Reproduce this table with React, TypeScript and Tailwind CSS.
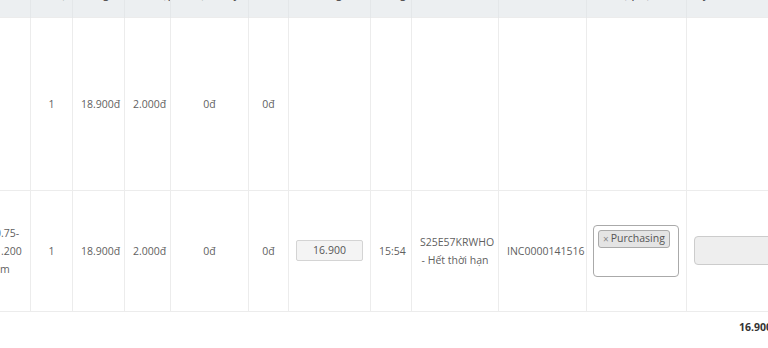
import React from 'react';

type Col = {width: string};

const cols: Col[] = [
	{width: 'w-[100px]'},
	{width: 'w-[42px]'},
	{width: 'w-[52px]'},
	{width: 'w-[46px]'},
	{width: 'w-[78px]'},
	{width: 'w-[40px]'},
	{width: 'w-[82px]'},
	{width: 'w-[41px]'},
	{width: 'w-[87px]'},
	{width: 'w-[88px]'},
	{width: 'w-[100px]'},
	{width: 'w-[138px]'},
];

const headers = [
	'Sản phẩm',
	'Số lượng',
	'Đơn giá',
	'Giá nhập',
	'Phí vận chuyển',
	'VAT',
	'Tổng',
	'Thời gian',
	'Voucher',
	'Mã hóa đơn',
	'Bộ phận',
	'Lý do',
];

const td = 'border border-[#ececec] px-2 text-center align-middle';

const OrderRow: React.FC<{first?: React.ReactNode; last?: boolean; height: string}> = ({first, last, height}) => {
	return (
		<tr className={height}>
			<td className={`${td} text-left`}>{first}</td>
			<td className={td}>1</td>
			<td className={`${td} px-1`}>18.900đ</td>
			<td className={`${td} px-1`}>2.000đ</td>
			<td className={td}>0đ</td>
			<td className={td}>0đ</td>
			<td className={`${td} pl-[7px]`}>
				{last && (
					<div className="h-[21px] w-[67px] rounded-[2px] border border-[#d4d4d4] bg-[#f4f4f4] text-center leading-[19px] text-[#555]">
						16.900
					</div>
				)}
			</td>
			<td className={`${td} px-1`}>{last && '15:54'}</td>
			<td className={`${td} px-1`}>
				{last && (
					<>
						S25E57KRWHO
						<br />- Hết thời hạn
					</>
				)}
			</td>
			<td className={`${td} px-1`}>{last && 'INC0000141516'}</td>
			<td className={`${td} px-[6px]`}>
				{last && (
					<div className="h-[52px] w-[86px] rounded-[4px] border border-[#aaaaaa] bg-white p-[4px] text-left">
						<span className="inline-flex h-[18px] items-center rounded-[3px] border border-[#aaaaaa] bg-[#e4e4e4] px-[4px] leading-none text-[#555]">
							<span className="mr-[2px] text-[10px] text-[#888]">×</span>Purchasing
						</span>
					</div>
				)}
			</td>
			<td className={`${td} pl-[7px] text-left`}>
				{last && <div className="h-[29px] w-[122px] rounded-[4px] border border-[#cccccc] bg-[#eeeeee]" />}
			</td>
		</tr>
	);
};

export default function App() {
	return (
		<div
			className="h-[348px] w-[768px] overflow-hidden bg-white text-[10.5px] leading-[18px] text-[#5f5f5f]"
			style={{fontFamily: '"Open Sans", "Noto Sans", sans-serif'}}
		>
			<table className="-ml-[70px] -mt-[19px] w-[894px] table-fixed border-collapse">
				<colgroup>
					{cols.map((c, i) => (
						<col key={i} className={c.width} />
					))}
				</colgroup>
				<thead className="bg-[#eceff1]">
					<tr className="h-[36px]">
						{headers.map((h, i) => (
							<th
								key={i}
								className={`overflow-hidden border-x border-[#e4e7e9] px-1 pb-[14px] align-bottom font-semibold whitespace-nowrap text-[#555] ${i === 11 ? 'pl-[10px] text-left' : 'text-center'}`}
							>
								{h}
							</th>
						))}
					</tr>
				</thead>
				<tbody>
					<OrderRow height="h-[173px]" />
					<OrderRow
						height="h-[121px]"
						last
						first={
							<div className="pl-[56px]">
								<div>0.75-</div>
								<div>1.200</div>
								<div className="ml-[5px]">m</div>
							</div>
						}
					/>
					<tr className="h-[40px]">
						<td colSpan={11} className="px-2"></td>
						<td className="px-2 pt-[6px] text-center align-top font-bold text-[#333]">16.900</td>
					</tr>
				</tbody>
			</table>
		</div>
	);
}
